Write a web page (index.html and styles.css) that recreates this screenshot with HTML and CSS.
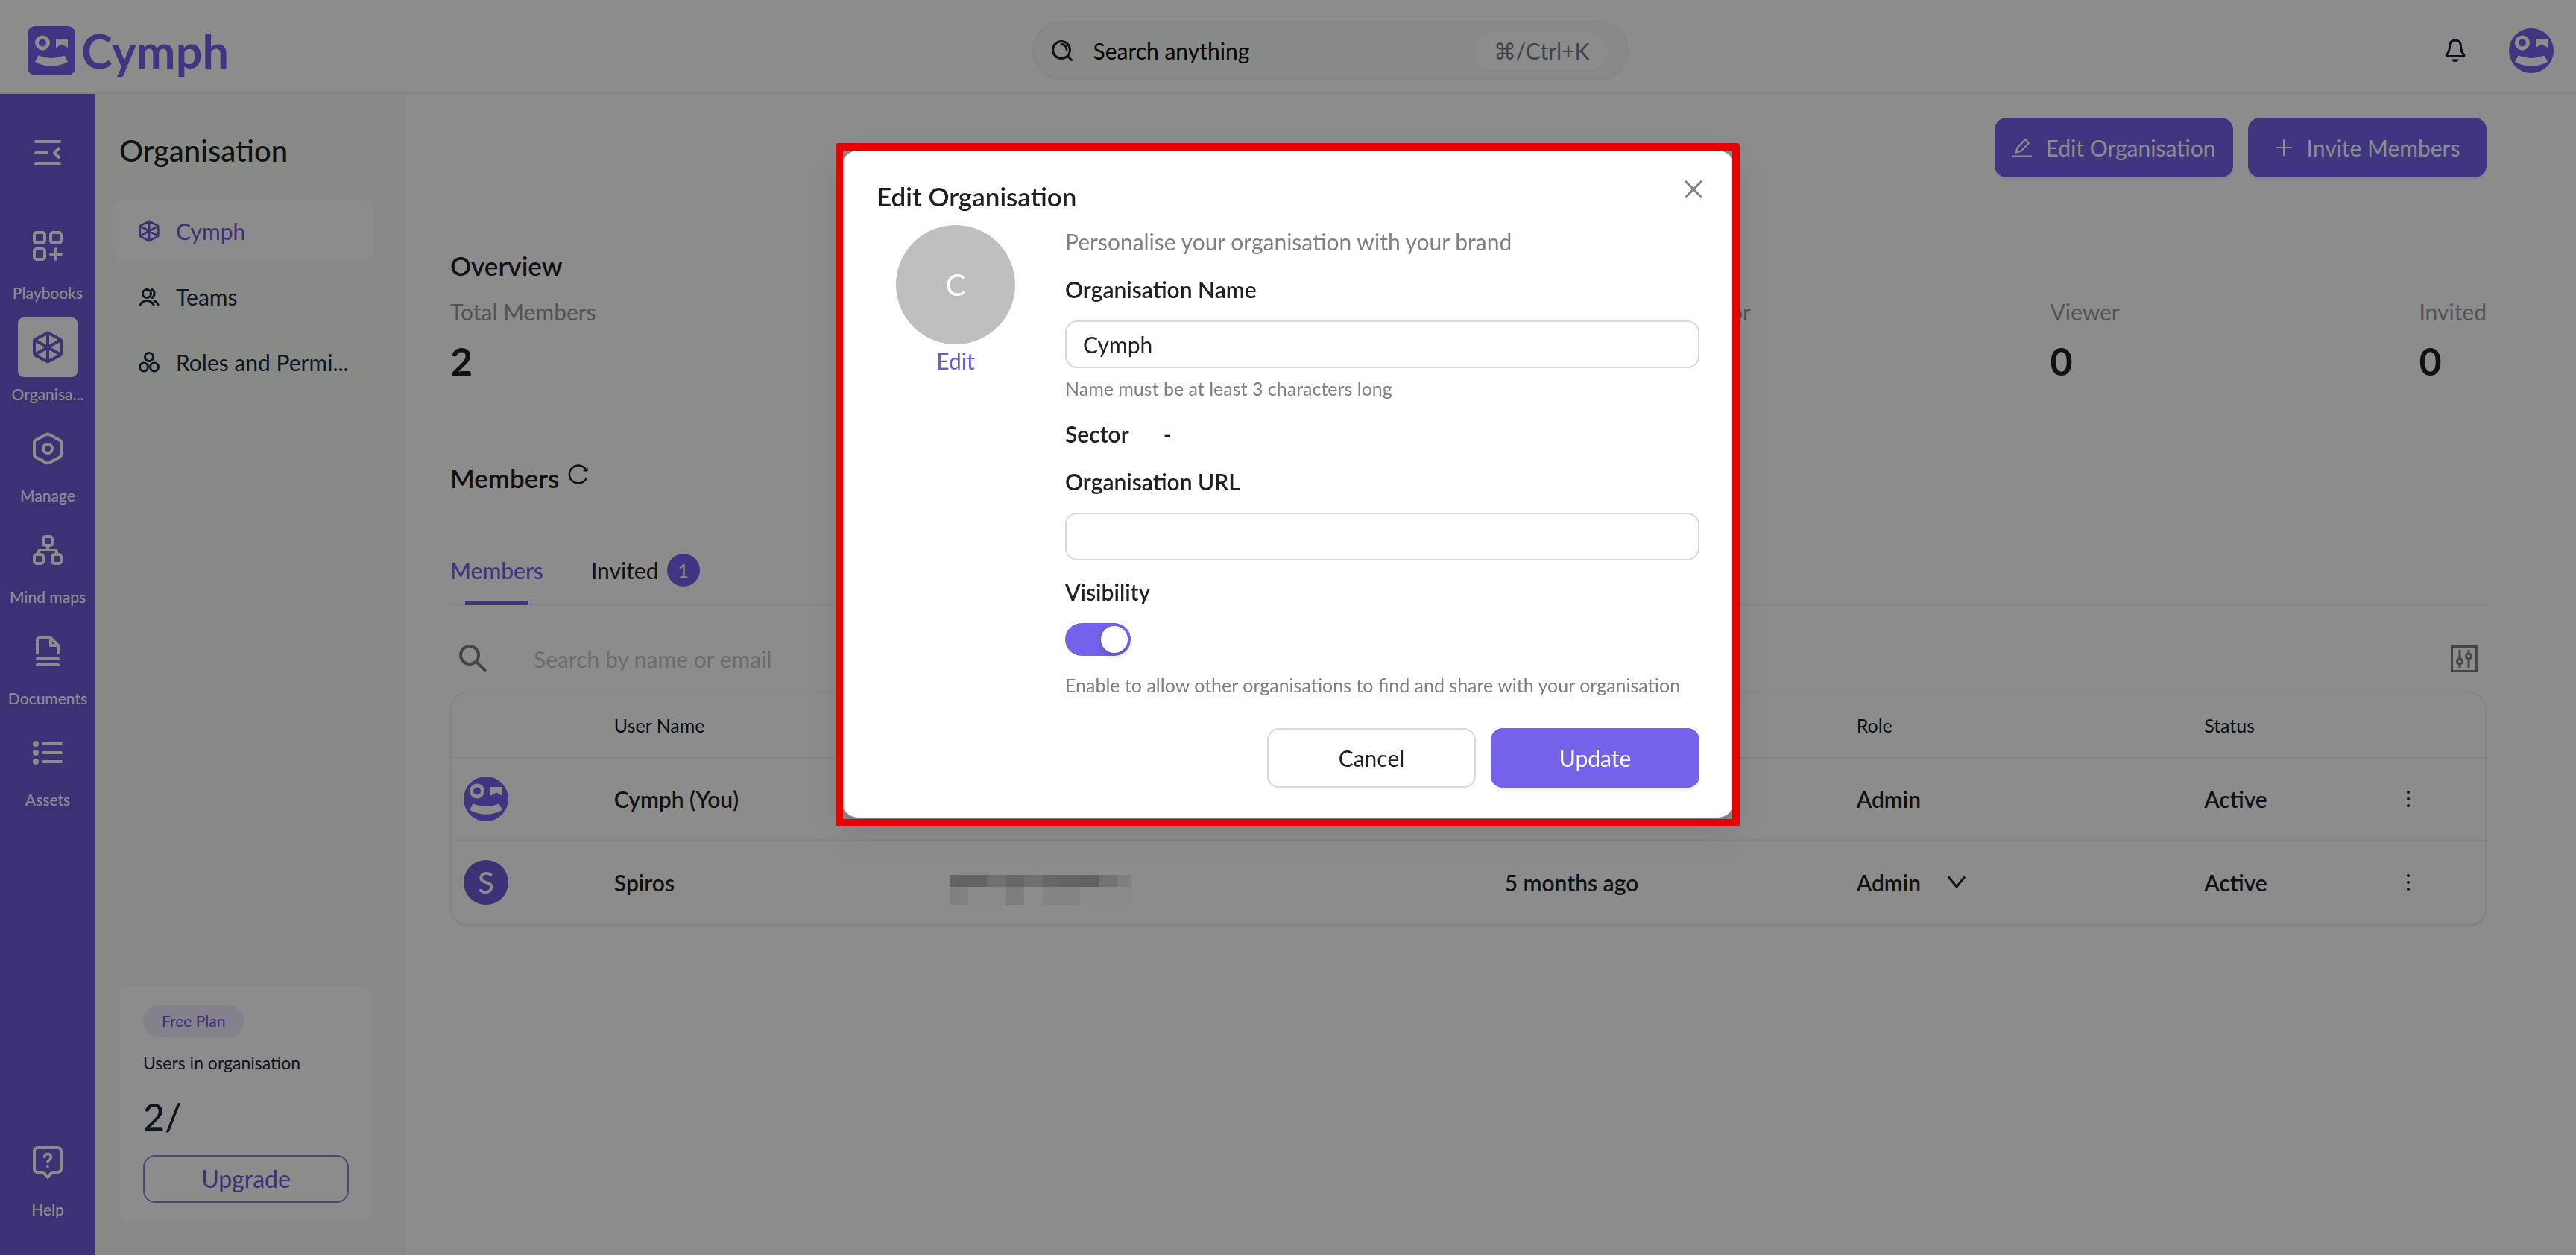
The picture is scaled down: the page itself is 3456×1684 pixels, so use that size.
FILE: index.html
```html
<!DOCTYPE html>
<html lang="en">
<head>
<meta charset="utf-8">
<meta name="viewport" content="width=device-width, initial-scale=1">
<title>Cymph</title>
<link rel="stylesheet" href="styles.css">
</head>
<body>
<svg class="defs" aria-hidden="true">
  <symbol id="face" viewBox="0 0 64 66">
    <circle cx="20" cy="22.500" r="7.500" fill="none" stroke="#fff" stroke-width="5"/>
    <path fill="#fff" d="M38 17h16v12l-8-4.500-8 4.500zM14.500 39.500Q32 46.500 49.500 39.500L54 48Q32 59.500 10 48z"/>
  </symbol>
  <symbol id="cube" viewBox="0 0 40 44">
    <path fill="none" stroke="currentColor" stroke-width="4" stroke-linejoin="round" d="M20 2.500 37 11.500Q38 12 38 13.500V30.500Q38 32 37 32.500L20 41.500 3 32.500Q2 32 2 30.500V13.500Q2 12 3 11.500ZM20 2.500V41.500M3 12.500 37 31.500M37 12.500 3 31.500"/>
  </symbol>
</svg>

<div class="app">
  <header class="topbar">
    <a class="brand" href="#">
      <svg class="brand-mark" viewBox="0 0 64 66"><rect width="64" height="66" rx="10" fill="#7562ea"/><use href="#face"/></svg>
      <span>Cymph</span>
    </a>
    <button class="search" type="button">
      <svg width="28" height="28" viewBox="0 0 28 28" fill="none" stroke="#1f1f1f" stroke-width="3" stroke-linecap="round"><circle cx="13" cy="13" r="11.500"/><path d="M21.500 21.500 26.500 26.500M13 5.500a7 7 0 0 1 7 7"/></svg>
      <span class="search-text">Search anything</span>
      <kbd>⌘/Ctrl+K</kbd>
    </button>
    <div class="account">
      <button class="plain" type="button" aria-label="Notifications">
        <svg width="28" height="32" viewBox="0 0 28 32" fill="none" stroke="#0f1a2b" stroke-width="3" stroke-linejoin="round"><path d="M14 2C9 2 6.500 5.500 6.500 10C6.500 17 4.500 19 2.500 21.500Q1.500 23.500 3.500 23.500H24.500Q26.500 23.500 25.500 21.500C23.500 19 21.500 17 21.500 10C21.500 5.500 19 2 14 2Z"/><path d="M9 27.500h10q-1 3.500-5 3.500t-5-3.500z" fill="#0f1a2b" stroke="none"/></svg>
      </button>
      <span class="avatar"><svg><use href="#face"/></svg></span>
    </div>
  </header>

  <nav class="rail">
    <button class="plain collapse" type="button" aria-label="Collapse menu">
      <svg width="36" height="34" viewBox="0 0 36 34" fill="none" stroke="#fff" stroke-width="4" stroke-linecap="round" stroke-linejoin="round"><path d="M2 2H34M2 17H17M2 32H34M33 11 27 17 33 23"/></svg>
    </button>
    <a class="rail-item" href="#"><span class="rail-icon"><svg width="40" height="40" viewBox="0 0 40 40" fill="none" stroke="currentColor" stroke-width="4" stroke-linecap="round"><rect x="2" y="2" width="14" height="14" rx="3"/><rect x="24" y="2" width="14" height="14" rx="3"/><rect x="2" y="24" width="14" height="14" rx="3"/><path d="M31 24V38M24 31H38"/></svg></span><span>Playbooks</span></a>
    <a class="rail-item current" href="#"><span class="rail-icon"><svg width="40" height="44"><use href="#cube"/></svg></span><span>Organisa...</span></a>
    <a class="rail-item" href="#"><span class="rail-icon"><svg width="40" height="44" viewBox="0 0 40 44" fill="none" stroke="currentColor" stroke-width="4" stroke-linejoin="round"><path d="M18 3Q20 2 22 3L36 10.500Q38 11.500 38 14V30Q38 32.500 36 33.500L22 41Q20 42 18 41L4 33.500Q2 32.500 2 30V14Q2 11.500 4 10.500Z"/><circle cx="20" cy="22" r="6"/></svg></span><span>Manage</span></a>
    <a class="rail-item" href="#"><span class="rail-icon"><svg width="40" height="40" viewBox="0 0 40 40" fill="none" stroke="currentColor" stroke-width="4"><rect x="14" y="2" width="12" height="12" rx="3"/><rect x="2" y="26" width="12" height="12" rx="3"/><rect x="26" y="26" width="12" height="12" rx="3"/><path d="M20 14V20M8 26V23Q8 20 11 20H29Q32 20 32 23V26"/></svg></span><span>Mind maps</span></a>
    <a class="rail-item" href="#"><span class="rail-icon"><svg width="32" height="40" viewBox="0 0 32 40" fill="none" stroke="currentColor" stroke-width="4" stroke-linecap="round" stroke-linejoin="round"><path d="M2 22V5Q2 2 5 2H20L30 12V22M20 2V12H30M2 30H30M2 38H30"/></svg></span><span>Documents</span></a>
    <a class="rail-item" href="#"><span class="rail-icon"><svg width="40" height="32" viewBox="0 0 40 32" fill="currentColor" stroke="currentColor"><g stroke="none"><circle cx="4" cy="4" r="4"/><circle cx="4" cy="16" r="4"/><circle cx="4" cy="28" r="4"/></g><path d="M14 4H38M14 16H38M14 28H38" stroke-width="4" stroke-linecap="round"/></svg></span><span>Assets</span></a>
    <a class="rail-item help" href="#"><span class="rail-icon"><svg width="40" height="44" viewBox="0 0 40 44" fill="none" stroke="currentColor" stroke-width="4" stroke-linejoin="round" stroke-linecap="round"><path d="M7 2H33Q38 2 38 7V30Q38 35 33 35H27Q25 35 24 37L20 42 16 37Q15 35 13 35H7Q2 35 2 30V7Q2 2 7 2Z"/><path d="M15.500 14.500Q16 10.500 20 10.500T24.500 14.500Q24.500 17 22 18.500T20 21.500" stroke-width="3.500"/><circle cx="20" cy="27" r="2" fill="currentColor" stroke="none"/></svg></span><span>Help</span></a>
  </nav>

  <aside class="panel">
    <h1>Organisation</h1>
    <nav class="panel-nav">
      <a class="current" href="#"><svg width="28" height="30"><use href="#cube"/></svg>Cymph</a>
      <a href="#"><svg width="28" height="28" viewBox="0 0 28 28" fill="none" stroke="currentColor" stroke-width="3" stroke-linecap="round"><circle cx="11" cy="10" r="5.500"/><path d="M18 4.500Q21.500 6 21 10.500T18 15.500M2 25Q5 19.500 11 19.500T20 25M21 19.500Q24.500 21 26 24.500"/></svg>Teams</a>
      <a href="#"><svg width="28" height="28" viewBox="0 0 28 28" fill="none" stroke="currentColor" stroke-width="3"><circle cx="14" cy="7" r="5.500"/><circle cx="7" cy="20.500" r="5.500"/><circle cx="21" cy="20.500" r="5.500"/></svg>Roles and Permi...</a>
    </nav>
    <section class="plan">
      <span class="pill">Free Plan</span>
      <p>Users in organisation</p>
      <strong>2/</strong>
      <button type="button">Upgrade</button>
    </section>
  </aside>

  <main class="main">
    <div class="actions">
      <button class="btn primary" type="button"><svg width="26" height="26" viewBox="0 0 26 26" fill="none" stroke="#fff" stroke-width="2"><path d="M0 24.500H26M6 14 17 2 22 7 11 18 5 19.500Z"/></svg>Edit Organisation</button>
      <button class="btn primary" type="button"><svg width="24" height="24" viewBox="0 0 24 24" stroke="#fff" stroke-width="2"><path d="M12 1V23M1 12H23"/></svg>Invite Members</button>
    </div>

    <h2>Overview</h2>
    <dl class="stats">
      <div><dt>Total Members</dt><dd>2</dd></div>
      <div><dt>Contributor</dt><dd>0</dd></div>
      <div><dt>Viewer</dt><dd>0</dd></div>
      <div><dt>Invited</dt><dd>0</dd></div>
    </dl>

    <div class="members-head">
      <h2>Members</h2>
      <button class="plain" type="button" aria-label="Refresh"><svg width="28" height="28" viewBox="0 0 28 28" fill="none" stroke="#1f1f1f" stroke-width="2.500"><path d="M25 18A12 12 0 1 1 24.500 8"/><path d="M26.500 4V9.500H20.500Z" fill="#1f1f1f" stroke="none"/></svg></button>
    </div>

    <div class="tabs">
      <button class="tab current" type="button">Members</button>
      <button class="tab" type="button">Invited <span class="badge">1</span></button>
    </div>

    <div class="filter">
      <svg width="38" height="38" viewBox="0 0 38 38" fill="none" stroke="#808080" stroke-width="4"><circle cx="14" cy="14" r="12"/><path d="M22.500 22.500 36 36"/></svg>
      <input type="search" placeholder="Search by name or email" aria-label="Search by name or email">
      <button class="plain" type="button" aria-label="Columns"><svg width="36" height="36" viewBox="0 0 36 36" fill="none" stroke="#808080" stroke-width="3"><rect x="1.500" y="1.500" width="33" height="33"/><path d="M12 6V18M12 25V30M24 6V11M24 18V30"/><circle cx="12" cy="21.500" r="3.500"/><circle cx="24" cy="14.500" r="3.500"/></svg></button>
    </div>

    <table class="members">
      <colgroup><col class="c-face"><col class="c-name"><col class="c-mail"><col class="c-seen"><col class="c-role"><col class="c-status"><col></colgroup>
      <thead><tr><th></th><th>User Name</th><th></th><th></th><th>Role</th><th>Status</th><th></th></tr></thead>
      <tbody>
        <tr>
          <td><span class="avatar"><svg><use href="#face"/></svg></span></td><td>Cymph (You)</td><td></td><td></td><td>Admin</td><td>Active</td>
          <td><button class="plain" type="button" aria-label="More"><svg width="8" height="24" viewBox="0 0 8 24" fill="#1f1f1f"><circle cx="4" cy="3" r="2"/><circle cx="4" cy="12" r="2"/><circle cx="4" cy="21" r="2"/></svg></button></td>
        </tr>
        <tr>
          <td><span class="avatar letter">S</span></td><td>Spiros</td>
          <td><svg class="masked" width="244" height="41" viewBox="0 0 244 41" shape-rendering="crispEdges">
            <path fill="#b4b4b4" d="M0 0h50v16H0z"/><path fill="#ccc" d="M50 0h25v16H50zM100 0h25v16h-25z"/><path fill="#bcbcbc" d="M75 0h25v16H75zM125 0h25v16h-25z"/><path fill="#b6b6b6" d="M150 0h25v16h-25z"/><path fill="#b0b0b0" d="M175 0h25v16h-25z"/><path fill="#cfcfcf" d="M200 0h25v16h-25z"/><path fill="#e5e5e5" d="M225 0h19v16h-19z"/>
            <path fill="#ececec" d="M0 16h25v25H0z"/><path fill="#fcfcfc" d="M25 16h50v25H25zM175 16h69v25h-69z"/><path fill="#e4e4e4" d="M75 16h25v25H75z"/><path fill="#f0f0f0" d="M125 16h50v25h-50z"/>
          </svg></td>
          <td>5 months ago</td>
          <td><span class="role"><select aria-label="Role"><option>Admin</option></select><svg width="26" height="18" viewBox="0 0 26 18" fill="none" stroke="#1f1f1f" stroke-width="3"><path d="M2 1.500 13 15 24 1.500"/></svg></span></td>
          <td>Active</td>
          <td><button class="plain" type="button" aria-label="More"><svg width="8" height="24" viewBox="0 0 8 24" fill="#1f1f1f"><circle cx="4" cy="3" r="2"/><circle cx="4" cy="12" r="2"/><circle cx="4" cy="21" r="2"/></svg></button></td>
        </tr>
      </tbody>
    </table>
  </main>
</div>

<div class="overlay">
  <form class="modal" role="dialog" aria-labelledby="modal-title">
    <div class="modal-head">
      <h2 id="modal-title">Edit Organisation</h2>
      <button class="plain close" type="button" aria-label="Close"><svg width="24" height="24" viewBox="0 0 24 24" stroke="#808080" stroke-width="3"><path d="M1 1 23 23M23 1 1 23"/></svg></button>
    </div>
    <div class="modal-body">
      <div class="picture"><span class="initial">C</span><a href="#">Edit</a></div>
      <div class="fields">
        <p class="lead">Personalise your organisation with your brand</p>
        <div class="field">
          <label for="name">Organisation Name</label>
          <div class="with-hint"><input class="box" id="name" type="text" value="Cymph"><p class="hint">Name must be at least 3 characters long</p></div>
        </div>
        <p class="sector"><b>Sector</b><span>-</span></p>
        <div class="field"><label for="url">Organisation URL</label><input class="box" id="url" type="text"></div>
        <div class="field"><label for="visibility">Visibility</label><input class="switch" id="visibility" type="checkbox" role="switch" checked><p class="hint">Enable to allow other organisations to find and share with your organisation</p></div>
      </div>
    </div>
    <div class="modal-foot">
      <button class="btn" type="button">Cancel</button>
      <button class="btn primary" type="submit">Update</button>
    </div>
  </form>
</div>
</body>
</html>
```
FILE: styles.css
```css
* { box-sizing: border-box; }

body {
  margin: 0;
  background: #fff;
  color: #1f1f1f;
  font: 400 30px/44px Lato, "Noto Sans", sans-serif;
}

h1, h2, p, dl, dd { margin: 0; }
h2 { font-size: 35px; font-weight: 600; line-height: 48px; }
a { color: inherit; text-decoration: none; }
button, input, select { font: inherit; color: inherit; }
svg { display: block; flex: none; }
.defs { position: absolute; width: 0; height: 0; }

.plain { display: block; padding: 0; border: 0; background: none; }

.app {
  display: grid;
  grid-template: auto 1fr / 128px 416px 1fr;
  min-height: 100vh;
}

/* Top bar */
.topbar {
  grid-column: 1 / -1;
  display: flex;
  justify-content: space-between;
  align-items: center;
  height: 126px;
  padding: 0 30px 0 37px;
  border-bottom: 2px solid #f0f0f0;
}
.brand {
  display: flex;
  align-items: center;
  gap: 8px;
  height: 72px;
  margin-top: 12px;
  color: #7562ea;
  font-size: 63px;
  font-weight: 700;
  line-height: 64px;
}
.brand-mark { width: 64px; height: 66px; }
.search {
  display: flex;
  align-items: center;
  gap: 27px;
  width: 800px;
  height: 80px;
  margin-top: 12px;
  padding: 0 24px;
  border: 2px solid #f0f5f2;
  border-radius: 40px;
  background: #f7fbf8;
  color: #000;
}
.search-text { margin-right: auto; }
.search kbd {
  height: 56px;
  padding: 4px 25px;
  border: 2px solid #f5f7f6;
  border-radius: 28px;
  background: #fff;
  color: #737a8a;
  font: inherit;
}
.account {
  display: flex;
  align-items: center;
  gap: 58px;
  margin-top: 12px;
  padding-left: 16px;
}
.avatar {
  display: flex;
  align-items: center;
  justify-content: center;
  width: 60px;
  height: 60px;
  border-radius: 50%;
  background: #7562ea;
  color: #fff;
}
.avatar svg { width: 64px; height: 66px; }
.avatar.letter { background: #6d59d5; font-size: 40px; font-weight: 500; }

/* Icon rail */
.rail {
  display: flex;
  flex-direction: column;
  align-items: center;
  gap: 20px;
  padding: 62px 0 48px;
  background: #6d59d5;
  color: #fff;
}
.collapse { margin-bottom: 48px; }
.rail-item {
  display: flex;
  flex-direction: column;
  align-items: center;
  gap: 10px;
  font-size: 21px;
  font-weight: 500;
  line-height: 26px;
}
.rail-icon {
  display: flex;
  align-items: center;
  justify-content: center;
  width: 80px;
  height: 80px;
  border-radius: 8px;
}
.rail-item.current .rail-icon { background: #fff; color: #6d59d5; }
.help { margin-top: auto; }

/* Section panel */
.panel {
  display: flex;
  flex-direction: column;
  padding: 48px 40px 46px 24px;
  border-right: 2px solid #f3f3f5;
  background: #f7fbf8;
}
.panel h1 {
  margin-bottom: 40px;
  padding-left: 8px;
  font-size: 40px;
  font-weight: 500;
  line-height: 56px;
}
.panel-nav { display: flex; flex-direction: column; gap: 8px; color: #1e2939; }
.panel-nav a {
  display: flex;
  align-items: center;
  gap: 22px;
  height: 80px;
  padding: 0 34px;
  border-radius: 16px;
  white-space: nowrap;
}
.panel-nav .current { background: #fff; color: #6d59d5; }
.plan {
  display: flex;
  flex-direction: column;
  align-items: flex-start;
  margin: auto 2px 0 8px;
  padding: 24px 32px;
  border-radius: 16px;
  background: #fff;
  color: #1e2939;
}
.pill {
  padding: 0 25px;
  border-radius: 22px;
  background: #f0ebff;
  color: #6d59d5;
  font-size: 21px;
}
.plan p { margin-top: 14px; font-size: 23px; line-height: 40px; }
.plan strong { margin: 20px 0; font-size: 50px; font-weight: 500; line-height: 64px; }
.plan button {
  align-self: stretch;
  height: 64px;
  border: 2px solid #8f80e0;
  border-radius: 16px;
  background: none;
  color: #6d59d5;
  font-size: 32px;
}

/* Main content */
.main { padding: 32px 120px 64px 60px; }
.actions { display: flex; justify-content: flex-end; gap: 20px; margin-bottom: 94px; }
.btn {
  display: flex;
  align-items: center;
  justify-content: center;
  gap: 19px;
  height: 80px;
  padding: 0;
  border: 2px solid #d9d9d9;
  border-radius: 16px;
  background: #fff;
  box-shadow: 0 4px 0 rgba(0, 0, 0, 0.02);
}
.btn.primary {
  border-color: #7562ea;
  background: #7562ea;
  box-shadow: 0 4px 0 #f4f0ff;
  color: #fff;
}
.actions .btn { width: 320px; }
.stats { display: flex; gap: 14.7%; margin-top: 16px; }
.stats div:first-child { margin-right: auto; }
.stats dt { color: #999; }
.stats dd { margin-top: 14px; font-size: 52px; font-weight: 700; line-height: 60px; }
.members-head { display: flex; align-items: flex-start; gap: 12px; margin-top: 103px; }
.members-head .plain { padding-top: 6px; }
.tabs {
  display: flex;
  gap: 64px;
  margin-top: 55px;
  border-bottom: 2px solid #f0f0f0;
}
.tab {
  position: relative;
  display: flex;
  align-items: center;
  gap: 11px;
  height: 90px;
  padding: 0;
  border: 0;
  background: none;
}
.tab.current { color: #7562ea; font-weight: 500; }
.tab.current::after {
  content: "";
  position: absolute;
  right: 20px;
  bottom: -2px;
  left: 20px;
  height: 6px;
  background: #7562ea;
}
.badge {
  width: 44px;
  height: 44px;
  border-radius: 50%;
  background: #7562ea;
  color: #fff;
  font-size: 25px;
}
.filter {
  display: flex;
  align-items: center;
  gap: 62px;
  height: 88px;
  margin-top: 28px;
  padding: 0 12px;
}
.filter input { flex: 1; height: 64px; padding: 0; border: 0; background: none; }
.filter input::placeholder { color: #c3c3c3; }

.members {
  width: 100%;
  table-layout: fixed;
  border: 2px solid #f0f0f0;
  border-bottom-width: 4px;
  border-radius: 24px;
  border-spacing: 0;
}
.c-face { width: 7.4%; }
.c-name { width: 16.5%; }
.c-mail { width: 27.3%; }
.c-seen { width: 17.3%; }
.c-role { width: 17.1%; }
.c-status { width: 9.9%; }
.members th, .members td { padding: 0 16px; text-align: left; }
.members th {
  height: 88px;
  border-bottom: 2px solid #f0f0f0;
  color: #0f1a2b;
  font-size: 25px;
  font-weight: 400;
}
.members td { height: 110px; border-bottom: 2px solid #f0f0f0; font-weight: 600; }
.members tr:last-child td { height: 112px; border-bottom: 0; }
.masked { margin-top: 20px; }
.role { display: flex; align-items: center; gap: 34px; }
.role select { padding: 0; border: 0; background: none; appearance: none; }

/* Dialog */
.overlay {
  position: fixed;
  inset: 0;
  padding-top: 202px;
  background: rgba(0, 0, 0, 0.45);
}
.modal {
  position: relative;
  width: 1200px;
  margin: 0 auto;
  padding: 40px 48px;
  border-radius: 24px;
  background: #fff;
  box-shadow: 0 12px 32px rgba(0, 0, 0, 0.08), 0 6px 12px -8px rgba(0, 0, 0, 0.12), 0 18px 56px 16px rgba(0, 0, 0, 0.05);
}
.modal::after {
  content: "";
  position: absolute;
  inset: -10px -6px -12px -7px;
  border: 10px solid #e60000;
  border-radius: 4px;
  pointer-events: none;
}
.modal-head { display: flex; justify-content: space-between; margin-bottom: 18px; }
.modal-head h2 { line-height: 42px; }
.close { width: 24px; height: 24px; margin-right: -4px; }
.modal-body { display: grid; grid-template-columns: 212px 1fr; gap: 41px; }
.picture { display: flex; flex-direction: column; align-items: center; color: #6d59d5; }
.initial {
  width: 160px;
  height: 160px;
  border-radius: 50%;
  background: #bfbfbf;
  color: #fff;
  font-size: 40px;
  line-height: 160px;
  text-align: center;
}
.fields, .field { display: flex; flex-direction: column; gap: 20px; }
.lead, .hint { color: #808080; }
.hint { font-size: 25px; line-height: 38px; }
.field label, .sector b { font-weight: 600; }
.with-hint { display: flex; flex-direction: column; gap: 8px; }
.box {
  width: 100%;
  height: 64px;
  padding: 0 22px;
  border: 2px solid #d9d9d9;
  border-radius: 16px;
  background: #fff;
}
.sector { display: flex; gap: 46px; }
.switch {
  width: 88px;
  height: 44px;
  margin: 0;
  padding: 4px;
  border-radius: 22px;
  background: #7562ea;
  appearance: none;
}
.switch::before {
  content: "";
  display: block;
  width: 36px;
  height: 36px;
  margin-left: auto;
  border-radius: 50%;
  background: #fff;
  box-shadow: 0 4px 8px rgba(0, 35, 11, 0.2);
}
.modal-foot { display: flex; justify-content: flex-end; gap: 20px; margin-top: 39px; }
.modal-foot .btn { width: 280px; }
```
